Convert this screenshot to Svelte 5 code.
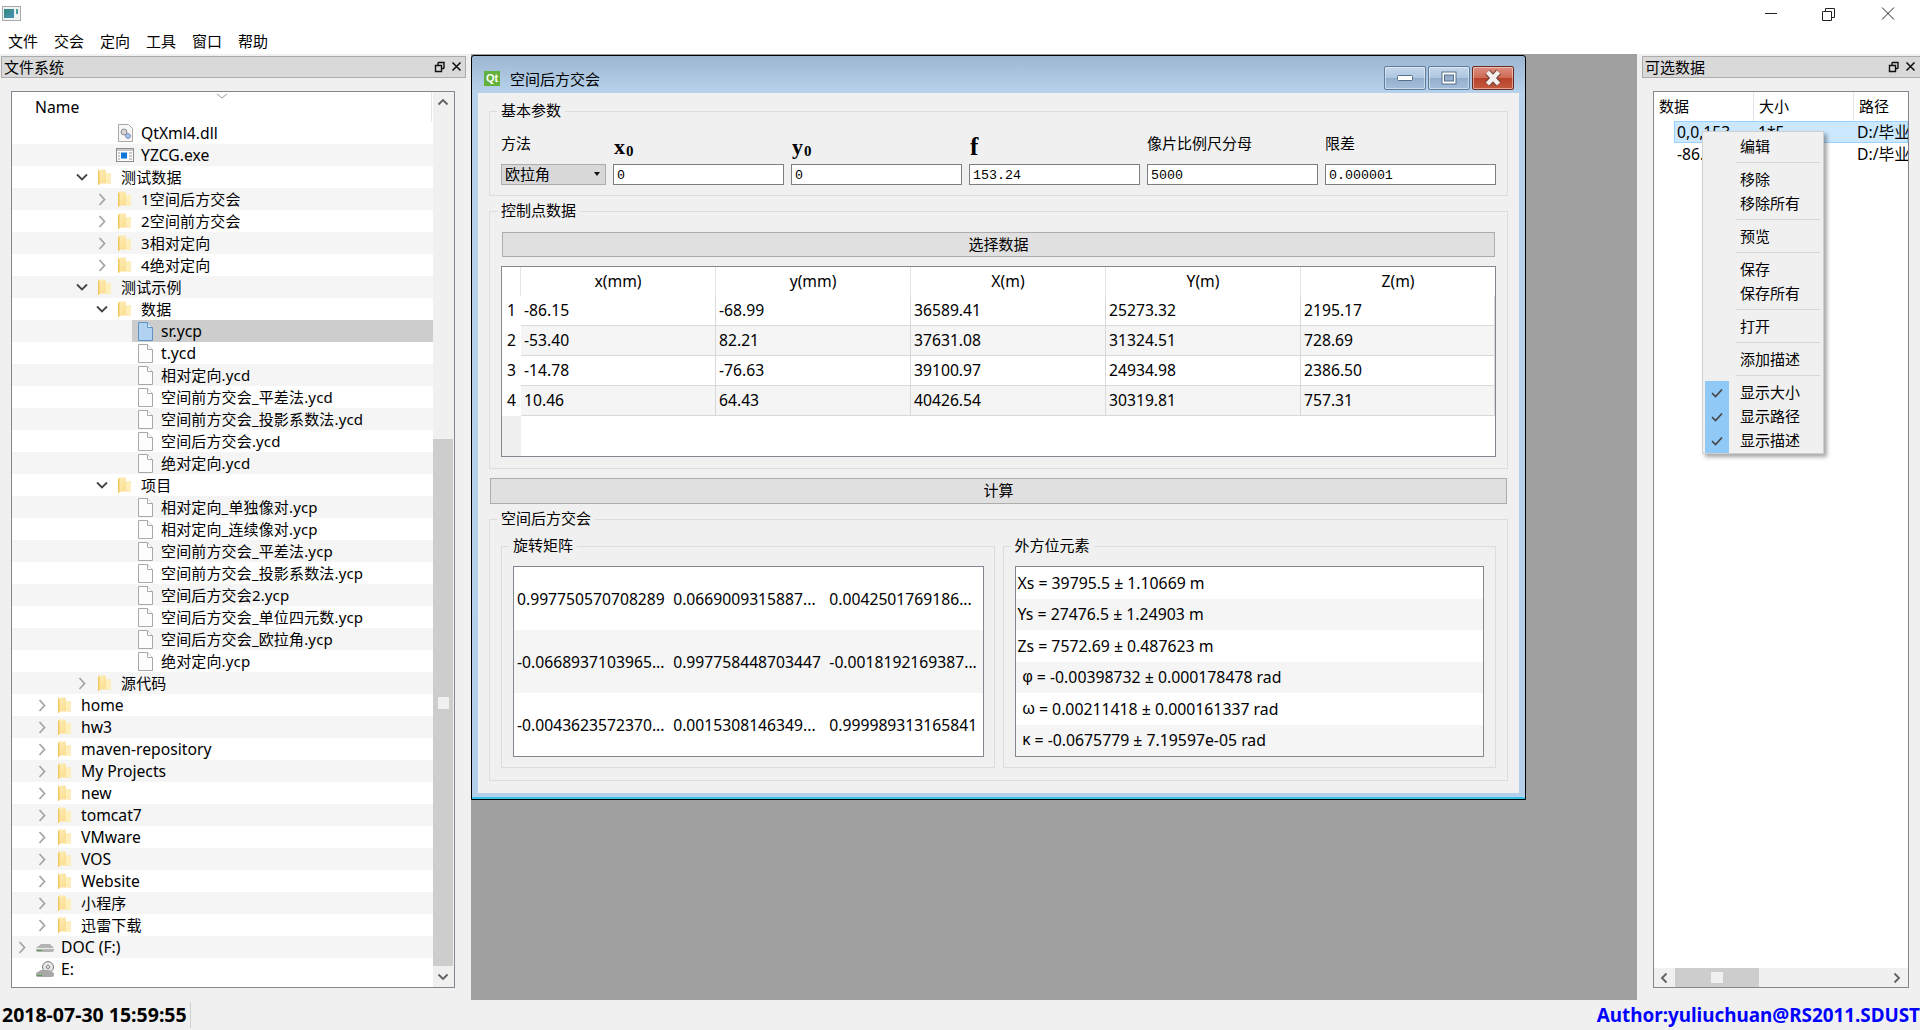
<script>
  const tree = [
    ['QtXml4.dll', 4, 'none', 'dll'],
    ['YZCG.exe', 4, 'none', 'exe'],
    ['测试数据', 3, 'open', 'folder'],
    ['1空间后方交会', 4, 'closed', 'folder'],
    ['2空间前方交会', 4, 'closed', 'folder'],
    ['3相对定向', 4, 'closed', 'folder'],
    ['4绝对定向', 4, 'closed', 'folder'],
    ['测试示例', 3, 'open', 'folder'],
    ['数据', 4, 'open', 'folder'],
    ['sr.ycp', 5, 'none', 'sel'],
    ['t.ycd', 5, 'none', 'file'],
    ['相对定向.ycd', 5, 'none', 'file'],
    ['空间前方交会_平差法.ycd', 5, 'none', 'file'],
    ['空间前方交会_投影系数法.ycd', 5, 'none', 'file'],
    ['空间后方交会.ycd', 5, 'none', 'file'],
    ['绝对定向.ycd', 5, 'none', 'file'],
    ['项目', 4, 'open', 'folder'],
    ['相对定向_单独像对.ycp', 5, 'none', 'file'],
    ['相对定向_连续像对.ycp', 5, 'none', 'file'],
    ['空间前方交会_平差法.ycp', 5, 'none', 'file'],
    ['空间前方交会_投影系数法.ycp', 5, 'none', 'file'],
    ['空间后方交会2.ycp', 5, 'none', 'file'],
    ['空间后方交会_单位四元数.ycp', 5, 'none', 'file'],
    ['空间后方交会_欧拉角.ycp', 5, 'none', 'file'],
    ['绝对定向.ycp', 5, 'none', 'file'],
    ['源代码', 3, 'closed', 'folder'],
    ['home', 1, 'closed', 'folder'],
    ['hw3', 1, 'closed', 'folder'],
    ['maven-repository', 1, 'closed', 'folder'],
    ['My Projects', 1, 'closed', 'folder'],
    ['new', 1, 'closed', 'folder'],
    ['tomcat7', 1, 'closed', 'folder'],
    ['VMware', 1, 'closed', 'folder'],
    ['VOS', 1, 'closed', 'folder'],
    ['Website', 1, 'closed', 'folder'],
    ['小程序', 1, 'closed', 'folder'],
    ['迅雷下载', 1, 'closed', 'folder'],
    ['DOC (F:)', 0, 'closed', 'drive'],
    ['E:', 0, 'none', 'cd']
  ];
  const isLatin = (s) => /^[\x00-\x7f]+$/.test(s);
  const menus = ['文件', '交会', '定向', '工具', '窗口', '帮助'];
  const heads = ['x(mm)', 'y(mm)', 'X(m)', 'Y(m)', 'Z(m)'];
  const points = [
    ['-86.15', '-68.99', '36589.41', '25273.32', '2195.17'],
    ['-53.40', '82.21', '37631.08', '31324.51', '728.69'],
    ['-14.78', '-76.63', '39100.97', '24934.98', '2386.50'],
    ['10.46', '64.43', '40426.54', '30319.81', '757.31']
  ];
  const matrix = [
    ['0.997750570708289', '0.0669009315887...', '0.0042501769186...'],
    ['-0.0668937103965...', '0.997758448703447', '-0.0018192169387...'],
    ['-0.0043623572370...', '0.0015308146349...', '0.999989313165841']
  ];
  const results = [
    ['', 'Xs = 39795.5 ± 1.10669 m'],
    ['', 'Ys = 27476.5 ± 1.24903 m'],
    ['', 'Zs = 7572.69 ± 0.487623 m'],
    ['φ', ' = -0.00398732 ± 0.000178478 rad'],
    ['ω', ' = 0.00211418 ± 0.000161337 rad'],
    ['κ', ' = -0.0675779 ± 7.19597e-05 rad']
  ];
  const fields = ['0', '0', '153.24', '5000', '0.000001'];
  const ctx = [
    ['编辑'], 0, ['移除'], ['移除所有'], 0, ['预览'], 0, ['保存'], ['保存所有'], 0, ['打开'], 0, ['添加描述'], 0,
    ['显示大小', 1], ['显示路径', 1], ['显示描述', 1]
  ];
</script>

{#snippet dockIcons()}
  <svg class="dockicon" width="28" height="12" viewBox="0 0 28 12">
    <path d="M4 1.5h6v6M1.5 4.5h6v6h-6z M4 1.5v3M7.5 7.5h2.5" fill="none" stroke="#111" stroke-width="1.4"/>
    <path d="M18.5 1.5l8 8M26.5 1.5l-8 8" fill="none" stroke="#111" stroke-width="1.6"/>
  </svg>
{/snippet}

<div class="root">
  <div class="titlebar">
    <div class="appicon"><span class="appicon-in"></span><span class="appicon-mark"></span></div>
    <div class="winctl">
      <svg width="160" height="16" viewBox="0 0 160 16">
        <path d="M5 7.5h12" stroke="#222" fill="none"/>
        <path d="M63.5 5.5h8v9h-9v-9zM65.5 5V2.5h9v9h-3" stroke="#222" fill="none"/>
        <path d="M122 1.5l12 12M134 1.5l-12 12" stroke="#222" fill="none"/>
      </svg>
    </div>
  </div>
  <div class="menubar">
    {#each menus as m}<span class="menuitem">{m}</span>{/each}
  </div>

  <div class="main">
    <aside class="dock left">
      <div class="docktitle"><span>文件系统</span>{@render dockIcons()}</div>
      <div class="treebox">
        <div class="treecol">
          <div class="treehead">
            <span>Name</span>
            <svg class="sort" width="12" height="6" viewBox="0 0 12 6"><path d="M1 1l5 4 5-4" fill="none" stroke="#999"/></svg>
          </div>
          <div class="rows">
            {#each tree as [name, level, arrow, icon], i}
              <div class="row" class:alt={i % 2 === 1}>
                <span class="indent" style="width:{level * 20}px"></span>
                <span class="arrow">
                  {#if arrow === 'open'}
                    <svg width="12" height="8" viewBox="0 0 12 8"><path d="M1 1.5l5 5 5-5" fill="none" stroke="#444" stroke-width="1.8"/></svg>
                  {:else if arrow === 'closed'}
                    <svg width="8" height="13" viewBox="0 0 8 13"><path d="M1.5 1l5 5.5-5 5.5" fill="none" stroke="#a6a6a6" stroke-width="1.8"/></svg>
                  {/if}
                </span>
                <div class="entry" class:selected={icon === 'sel'}>
                  <span class="iconslot">
                    {#if icon === 'folder'}
                      <svg class="i-folder" width="13" height="18" viewBox="0 0 13 18">
                        <defs><linearGradient id="fg" x1="0" y1="0" x2="1" y2="1"><stop offset="0" stop-color="#fdedb8"/><stop offset="1" stop-color="#fad97f"/></linearGradient></defs>
                        <path d="M0 2.500q0-1 1-1h6q1 0 1 1v3h5v10H2.500L0 17.500z" fill="url(#fg)"/>
                        <path d="M0 2.500v15l1.500-2V3z" fill="#f0c75c"/>
                        <path d="M8 5.500v10h5v-10z" fill="#feeebb"/>
                      </svg>
                    {:else if icon === 'file' || icon === 'sel'}
                      <svg class="i-file" width="15" height="19" viewBox="0 0 15 19">
                        <path d="M.5.5h9l5 5v13H.5z" fill={icon === 'sel' ? '#b1d3f1' : '#fdfdfd'} stroke={icon === 'sel' ? '#5f93c4' : '#a8a8a8'}/>
                        <path d="M9.500.5v5h5" fill={icon === 'sel' ? '#dcebf8' : '#fff'} stroke={icon === 'sel' ? '#5f93c4' : '#a8a8a8'}/>
                      </svg>
                    {:else if icon === 'dll'}
                      <svg class="i-file" width="15" height="18" viewBox="0 0 15 18">
                        <path d="M.5.5h10l4 4v13H.5z" fill="#f8f8f8" stroke="#a8a8a8"/>
                        <circle cx="6" cy="8" r="3" fill="#d4d4d4" stroke="#8e8e8e"/>
                        <circle cx="10" cy="12" r="2.400" fill="#a9c8e6" stroke="#6f8fae"/>
                      </svg>
                    {:else if icon === 'exe'}
                      <svg class="i-wide" width="18" height="14" viewBox="0 0 18 14">
                        <rect x=".5" y=".5" width="17" height="13" fill="#fbfbfb" stroke="#8e8e8e"/>
                        <path d="M1 1h16v2H1z" fill="#c9c9c9"/>
                        <rect x="5" y="4.500" width="6" height="6" fill="#0f78d7"/>
                        <path d="M2 5h2M2 8h2M2 11h2M13 5h3M13 8h3M13 11h3" stroke="#9a9a9a"/>
                      </svg>
                    {:else if icon === 'drive'}
                      <svg class="i-wide" width="18" height="11" viewBox="0 0 18 11">
                        <path d="M0 6l5-4h9l4 4v3l-2 1H1.500L0 9z" fill="#b4b4b4"/>
                        <path d="M0 6h18v1H0z" fill="#eeeeee"/>
                        <path d="M1 8h5v1H1z" fill="#4fa055"/>
                      </svg>
                    {:else}
                      <svg class="i-wide" width="18" height="18" viewBox="0 0 18 18">
                        <circle cx="12" cy="7" r="5.500" fill="#e4e4e4" stroke="#7d7d7d"/>
                        <circle cx="12" cy="7" r="1.500" fill="#fff" stroke="#7d7d7d"/>
                        <path d="M0 13l5-3h8l5 3v3l-2 1H1.500L0 16z" fill="#a8a8a8"/>
                        <path d="M1 15h5v1H1z" fill="#4fa055"/>
                      </svg>
                    {/if}
                  </span>
                  <span class="name" class:latin={isLatin(name)}>{name}</span>
                </div>
              </div>
            {/each}
          </div>
        </div>
        <div class="vscroll">
          <div class="vtop">
            <svg width="12" height="8" viewBox="0 0 12 8"><path d="M1.500 6.500l4.500-4.500 4.500 4.500" fill="none" stroke="#606060" stroke-width="1.8"/></svg>
          </div>
          <div class="vthumb"><span class="vgrip"></span></div>
          <div class="vbottom">
            <svg width="12" height="8" viewBox="0 0 12 8"><path d="M1.500 1.500l4.500 4.500 4.500-4.500" fill="none" stroke="#606060" stroke-width="1.8"/></svg>
          </div>
        </div>
      </div>
    </aside>

    <div class="mdi">
      <section class="subwin">
        <header class="subtitle">
          <span class="qt">Qt</span>
          <span class="subname">空间后方交会</span>
          <div class="subbtns">
            <button class="wbtn" aria-label="minimize">
              <svg width="16" height="8" viewBox="0 0 16 8"><rect x=".5" y="1.500" width="15" height="5" rx="1" fill="#fff" stroke="#56708c"/></svg>
            </button>
            <button class="wbtn" aria-label="maximize">
              <svg width="16" height="14" viewBox="0 0 16 14"><rect x="1" y="1" width="14" height="12" fill="#fff" stroke="#56708c"/><rect x="3.500" y="4" width="9" height="6" fill="#94aecb" stroke="#56708c"/></svg>
            </button>
            <button class="wbtn close" aria-label="close">
              <svg width="20" height="18" viewBox="0 0 20 18"><path d="M4.500 3l11 12M15.500 3l-11 12" stroke="#6e3a33" stroke-width="6.500"/><path d="M4.500 3l11 12M15.500 3l-11 12" stroke="#f4f0ee" stroke-width="4.500"/></svg>
            </button>
          </div>
        </header>
        <div class="client">
          <div class="group g-basic">
            <span class="legend">基本参数</span>
            <div class="paramgrid">
              <span class="plabel">方法</span>
              <span class="mlabel">x<sub>0</sub></span>
              <span class="mlabel">y<sub>0</sub></span>
              <span class="mlabel big">f</span>
              <span class="plabel">像片比例尺分母</span>
              <span class="plabel">限差</span>
              <div class="combo"><span>欧拉角</span><i class="caret"></i></div>
              {#each fields as f}<div class="field">{f}</div>{/each}
            </div>
          </div>

          <div class="group g-control">
            <span class="legend">控制点数据</span>
            <div class="btn inset">选择数据</div>
            <div class="ptable">
              <div class="phead corner"></div>
              {#each heads as h}<div class="phead">{h}</div>{/each}
              {#each points as p, r}
                <div class="pnum">{r + 1}</div>
                {#each p as v}<div class="pcell" class:alt={r % 2 === 1}>{v}</div>{/each}
              {/each}
              <div class="pfill-num"></div>
              <div class="pfill"></div>
            </div>
          </div>

          <div class="btn calc">计算</div>

          <div class="group g-result">
            <span class="legend">空间后方交会</span>
            <div class="resgrid">
              <div class="group sub">
                <span class="legend">旋转矩阵</span>
                <div class="matrix">
                  {#each matrix as row, r}
                    {#each row as v}<div class="mcell" class:alt={r === 1}>{v}</div>{/each}
                  {/each}
                </div>
              </div>
              <div class="group sub second">
                <span class="legend">外方位元素</span>
                <div class="reslist">
                  {#each results as [g, t], i}
                    <div class="resrow" class:alt={i % 2 === 1} class:greek={g}>{#if g}<span class="glyph">{g}</span>{/if}{t}</div>
                  {/each}
                </div>
              </div>
            </div>
          </div>
        </div>
      </section>
    </div>

    <aside class="dock right">
      <div class="docktitle"><span>可选数据</span>{@render dockIcons()}</div>
      <div class="datalist">
        <div class="dhead"><span>数据</span><span>大小</span><span>路径</span></div>
        <div class="drows">
          <div class="drow sel"><span>0,0,153...</span><span>1*5</span><span>D:/毕业设计/测试</span></div>
          <div class="drow"><span>-86.15,-68.99</span><span>4*5</span><span>D:/毕业设计/测试</span></div>
        </div>
        <div class="hscroll">
          <svg class="harrow" width="8" height="12" viewBox="0 0 8 12"><path d="M6.500 1.500l-4.500 4.500 4.500 4.500" fill="none" stroke="#606060" stroke-width="1.8"/></svg>
          <div class="hthumb"><span class="hgrip"></span></div>
          <svg class="harrow end" width="8" height="12" viewBox="0 0 8 12"><path d="M1.500 1.500l4.500 4.500-4.500 4.500" fill="none" stroke="#606060" stroke-width="1.8"/></svg>
        </div>
      </div>
    </aside>
  </div>

  <footer class="status">
    <span class="clock">2018-07-30 15:59:55</span>
    <span class="author">Author:yuliuchuan@RS2011.SDUST</span>
  </footer>

  <div class="ctxmenu">
    {#each ctx as item}
      {#if item === 0}
        <div class="ctxsep"></div>
      {:else}
        <div class="ctxitem">
          <span class="ctxcheck" class:on={item[1]}>
            {#if item[1]}
              <svg width="12" height="10" viewBox="0 0 12 10"><path d="M1 5l3.500 3.500L11 1.500" fill="none" stroke="#444" stroke-width="1.600"/></svg>
            {/if}
          </span>
          <span class="ctxtext">{item[0]}</span>
        </div>
      {/if}
    {/each}
  </div>
</div>

<style>
  :global(body) { margin: 0; }
  .root {
    position: relative;
    width: 1920px;
    height: 1030px;
    overflow: hidden;
    display: flex;
    flex-direction: column;
    background: #f0f0f0;
    color: #000;
    font: 15px/20px "Noto Sans", "Noto Sans CJK SC", sans-serif;
  }
  .titlebar { height: 27px; background: #fff; display: flex; align-items: flex-start; justify-content: space-between; }
  .appicon { width: 19px; height: 15px; margin: 6px 0 0 2px; border: 1px solid #a9a9a9; box-sizing: border-box; background: #eef3f3; display: flex; gap: 2px; padding: 2px 1px; }
  .appicon-in { width: 10px; background: linear-gradient(135deg, #2f8a7d, #4c8fb8); }
  .appicon-mark { width: 2px; height: 5px; background: #4c9aa0; }
  .winctl { margin: 6px 0 0 0; line-height: 0; }
  .menubar { height: 27px; background: #fff; display: flex; align-items: center; }
  .menuitem { padding: 0 8px; }

  .main { height: 946px; display: flex; }
  .dock { display: flex; flex-direction: column; box-sizing: border-box; padding-top: 2px; }
  .dock.left { width: 471px; }
  .dock.right { width: 283px; }
  .docktitle { height: 22px; box-sizing: border-box; background: #d9d9d9; border: 1px solid #ababab; display: flex; align-items: center; justify-content: space-between; padding-left: 2px; }
  .left .docktitle { margin: 0 5px 0 1px; }
  .right .docktitle { margin-left: 5px; border-right: 0; }
  .dockicon { margin-right: 3px; }
  .right .dockicon { margin-right: 4px; }

  .treebox { margin: 13px 0 12px 11px; width: 444px; flex: 1; min-height: 0; box-sizing: border-box; border: 1px solid #828790; background: #fff; display: flex; }
  .treecol { width: 421px; display: flex; flex-direction: column; }
  .treehead { position: relative; height: 30px; flex: none; box-sizing: border-box; padding: 5px 0 0 23px; border-right: 1px solid #e5e5e5; width: 420px; font-size: 15.700px; }
  .sort { position: absolute; left: 204px; top: 1px; }
  .rows { flex: 1; overflow: hidden; }
  .row { height: 22px; display: flex; align-items: stretch; line-height: 22px; }
  .row.alt { background: #f5f5f5; }
  .indent { flex: none; }
  .arrow { flex: none; width: 20px; display: flex; align-items: center; justify-content: center; }
  .entry { flex: 1; display: flex; align-items: center; min-width: 0; }
  .entry.selected { background: #cdcdcd; }
  .iconslot { flex: none; width: 29px; height: 22px; display: flex; align-items: center; box-sizing: border-box; }
  .i-folder, .i-file { margin-left: 6px; }
  .i-wide { margin-left: 4px; }
  .name { white-space: nowrap; letter-spacing: .15px; margin-top: -1px; }
  .name.latin { font-size: 15.700px; letter-spacing: 0; margin-top: -1px; }

  .vscroll { flex: 1; display: flex; flex-direction: column; background: #f0f0f0; }
  .vtop { height: 347px; flex: none; display: flex; justify-content: center; padding-top: 6px; box-sizing: border-box; margin-right: 1px; }
  .vthumb { height: 527px; flex: none; margin-right: 1px; background: #cdcdcd; display: flex; align-items: center; justify-content: center; }
  .vgrip { width: 11px; height: 12px; background: #f0f0f0; }
  .vbottom { flex: 1; display: flex; justify-content: center; align-items: center; margin-right: 1px; }

  .mdi { flex: 1; position: relative; background: #a0a0a0; }
  .subwin {
    position: absolute;
    left: 0;
    top: 1px;
    width: 1055px;
    height: 745px;
    box-sizing: border-box;
    border: 1px solid #000;
    border-radius: 3px 3px 0 0;
    background: linear-gradient(#9db6d3 0, #b7d2ea 37px, #b5d0ea 100%);
    box-shadow: inset 0 -2px 0 #38c0e8;
    display: flex;
    flex-direction: column;
  }
  .subtitle { height: 37px; flex: none; position: relative; display: flex; align-items: center; padding: 9px 0 0 12px; box-sizing: border-box; }
  .qt { width: 16px; height: 15px; background: #62b13a; color: #fff; font: bold 11px/14px "Liberation Sans", sans-serif; text-align: center; margin-top: -1px; }
  .subname { margin-left: 10px; }
  .subbtns { position: absolute; right: 11px; top: 10px; display: flex; gap: 2px; }
  .wbtn {
    width: 42px;
    height: 24px;
    padding: 0;
    box-sizing: border-box;
    border: 1px solid #5e7c9d;
    border-radius: 2px;
    background: linear-gradient(#c5d8ec 0, #adc6e0 48%, #94afcd 52%, #a5bfda 100%);
    box-shadow: inset 0 0 0 1px rgba(255, 255, 255, .45);
    display: flex;
    align-items: center;
    justify-content: center;
  }
  .wbtn.close { border-color: #6d2a1f; background: linear-gradient(#dd8f80 0, #cf6a55 48%, #b8432a 52%, #c35a40 100%); }

  .client { margin: 0 6px; height: 700px; flex: none; box-sizing: border-box; background: #f0f0f0; padding: 18px 11px 0; display: flex; flex-direction: column; }
  .group { position: relative; border: 1px solid #dcdcdc; box-sizing: border-box; }
  .legend { position: absolute; top: -12px; left: 7px; padding: 0 4px; background: #f0f0f0; line-height: 20px; white-space: nowrap; }

  .g-basic { height: 85px; padding: 18px 11px 0; }
  .paramgrid { display: grid; grid-template-columns: 105px repeat(5, 1fr); grid-template-rows: 34px 21px; column-gap: 7px; }
  .plabel { margin-top: 3px; }
  .mlabel { font: bold 22px/24px "Liberation Serif", serif; margin-top: 5px; margin-left: 1px; }
  .mlabel sub { font-size: 15px; line-height: 0; vertical-align: -2px; margin-left: 1px; }
  .mlabel.big { font-size: 25px; }
  .combo { background: #d8d8d8; border: 1px solid #adadad; box-sizing: border-box; display: flex; align-items: center; justify-content: space-between; padding: 0 5px 1px 3px; }
  .caret { width: 0; height: 0; border: 3.500px solid transparent; border-top: 4px solid #111; border-bottom: 0; }
  .field { background: #fff; border: 1px solid #7e7e7e; box-sizing: border-box; font: 13.300px/21px "Liberation Mono", monospace; padding-left: 3px; }

  .g-control { height: 258px; margin-top: 15px; padding: 20px 11px 0; }
  .btn { height: 25px; background: #e0e0e0; border: 1px solid #adadad; box-sizing: border-box; text-align: center; line-height: 23px; }
  .btn.inset { margin: 0 1px; }
  .ptable { margin-top: 9px; height: 191px; box-sizing: border-box; border: 1px solid #828790; background: #fff; display: grid; grid-template-columns: 19px repeat(4, 195px) 1fr; grid-template-rows: 29px repeat(4, 30px) 1fr; font-size: 15.700px; }
  .phead { text-align: center; line-height: 28px; border-right: 1px solid #e5e5e5; box-sizing: border-box; }
  .phead:nth-child(6) { border-right: 0; }
  .pnum { text-align: center; line-height: 29px; box-sizing: border-box; }
  .pcell { padding-left: 3px; line-height: 29px; border-right: 1px solid #d9d9d9; border-bottom: 1px solid #d9d9d9; box-sizing: border-box; }
  .pcell.alt { background: #f5f5f5; }
  .pfill-num { background: #f0f0f0; }
  .pfill { grid-column: 2 / 7; }

  .btn.calc { height: 26px; margin: 9px 1px 0; line-height: 22px; }

  .g-result { height: 262px; margin-top: 15px; padding: 26px 11px 0; }
  .resgrid { display: grid; grid-template-columns: 1fr 1fr; column-gap: 8px; }
  .sub { height: 222px; padding: 19px 10px 0 11px; }
  .sub.second { padding-right: 11px; }
  .matrix, .reslist { height: 191px; box-sizing: border-box; border: 1px solid #828790; background: #fff; }
  .matrix { display: grid; grid-template-columns: repeat(3, 1fr); grid-template-rows: repeat(3, 1fr); }
  .mcell { display: flex; align-items: center; padding-left: 3px; white-space: nowrap; overflow: hidden; font-size: 15.700px; }
  .mcell.alt { background: #f5f5f5; }
  .reslist { display: grid; grid-template-rows: repeat(6, 1fr); font-size: 15.800px; }
  .resrow { display: flex; align-items: center; padding-left: 2px; white-space: pre; }
  .resrow.alt { background: #f5f5f5; }
  .resrow.greek { padding-left: 7px; }
  .glyph { font-family: "Liberation Sans", sans-serif; }

  .datalist { margin: 13px 11px 12px 16px; flex: 1; min-height: 0; box-sizing: border-box; border: 1px solid #828790; background: #fff; display: flex; flex-direction: column; overflow: hidden; }
  .dhead { height: 29px; flex: none; display: grid; grid-template-columns: 100px 100px 100px; }
  .dhead span { padding-left: 5px; line-height: 28px; border-right: 1px solid #e5e5e5; box-sizing: border-box; }
  .drows { flex: 1; font-size: 15.700px; }
  .drow { height: 22px; margin-left: 20px; width: 234px; display: grid; grid-template-columns: 80px 100px 54px; line-height: 22px; box-sizing: border-box; white-space: nowrap; overflow: hidden; }
  .drow span { overflow: hidden; padding-left: 3px; }
  .drow span:nth-child(2) { padding-left: 4px; }
  .drow.sel { background: #cce8ff; box-shadow: inset 0 0 0 1px #99d1ff; }
  .hscroll { height: 19px; flex: none; background: #f0f0f0; display: flex; align-items: center; }
  .harrow { margin-left: 6px; flex: none; }
  .hthumb { width: 84px; height: 19px; margin-left: 7px; background: #cdcdcd; display: flex; align-items: center; justify-content: center; }
  .hgrip { width: 12px; height: 11px; background: #f0f0f0; }
  .harrow.end { margin-left: auto; margin-right: 7px; }

  .status { flex: 1; display: flex; justify-content: space-between; align-items: center; }
  .clock { font-weight: 700; font-size: 19.500px; line-height: 26px; padding: 0 3px 0 2px; border-right: 1px solid #d0d0d0; }
  .author { font-weight: 700; font-size: 18.850px; color: #0000ff; }

  .ctxmenu { position: absolute; left: 1702px; top: 131px; width: 122px; box-sizing: border-box; border: 1px solid #cfcfcf; background: #f0f0f0; padding: 3px 2px 0; box-shadow: 3px 3px 4px rgba(0, 0, 0, .35); height: 323px; }
  .ctxitem { height: 24px; display: flex; align-items: center; }
  .ctxtext { margin-top: -2px; }
  .ctxcheck { width: 24px; height: 24px; margin-right: 11px; flex: none; display: flex; align-items: center; justify-content: center; }
  .ctxcheck.on { background: #90c8f6; }
  .ctxsep { height: 9px; margin-left: 31px; margin-right: 1px; box-sizing: border-box; position: relative; }
  .ctxsep::after { content: ""; position: absolute; left: 0; right: 0; top: 3px; height: 1px; background: #d7d7d7; }
</style>
